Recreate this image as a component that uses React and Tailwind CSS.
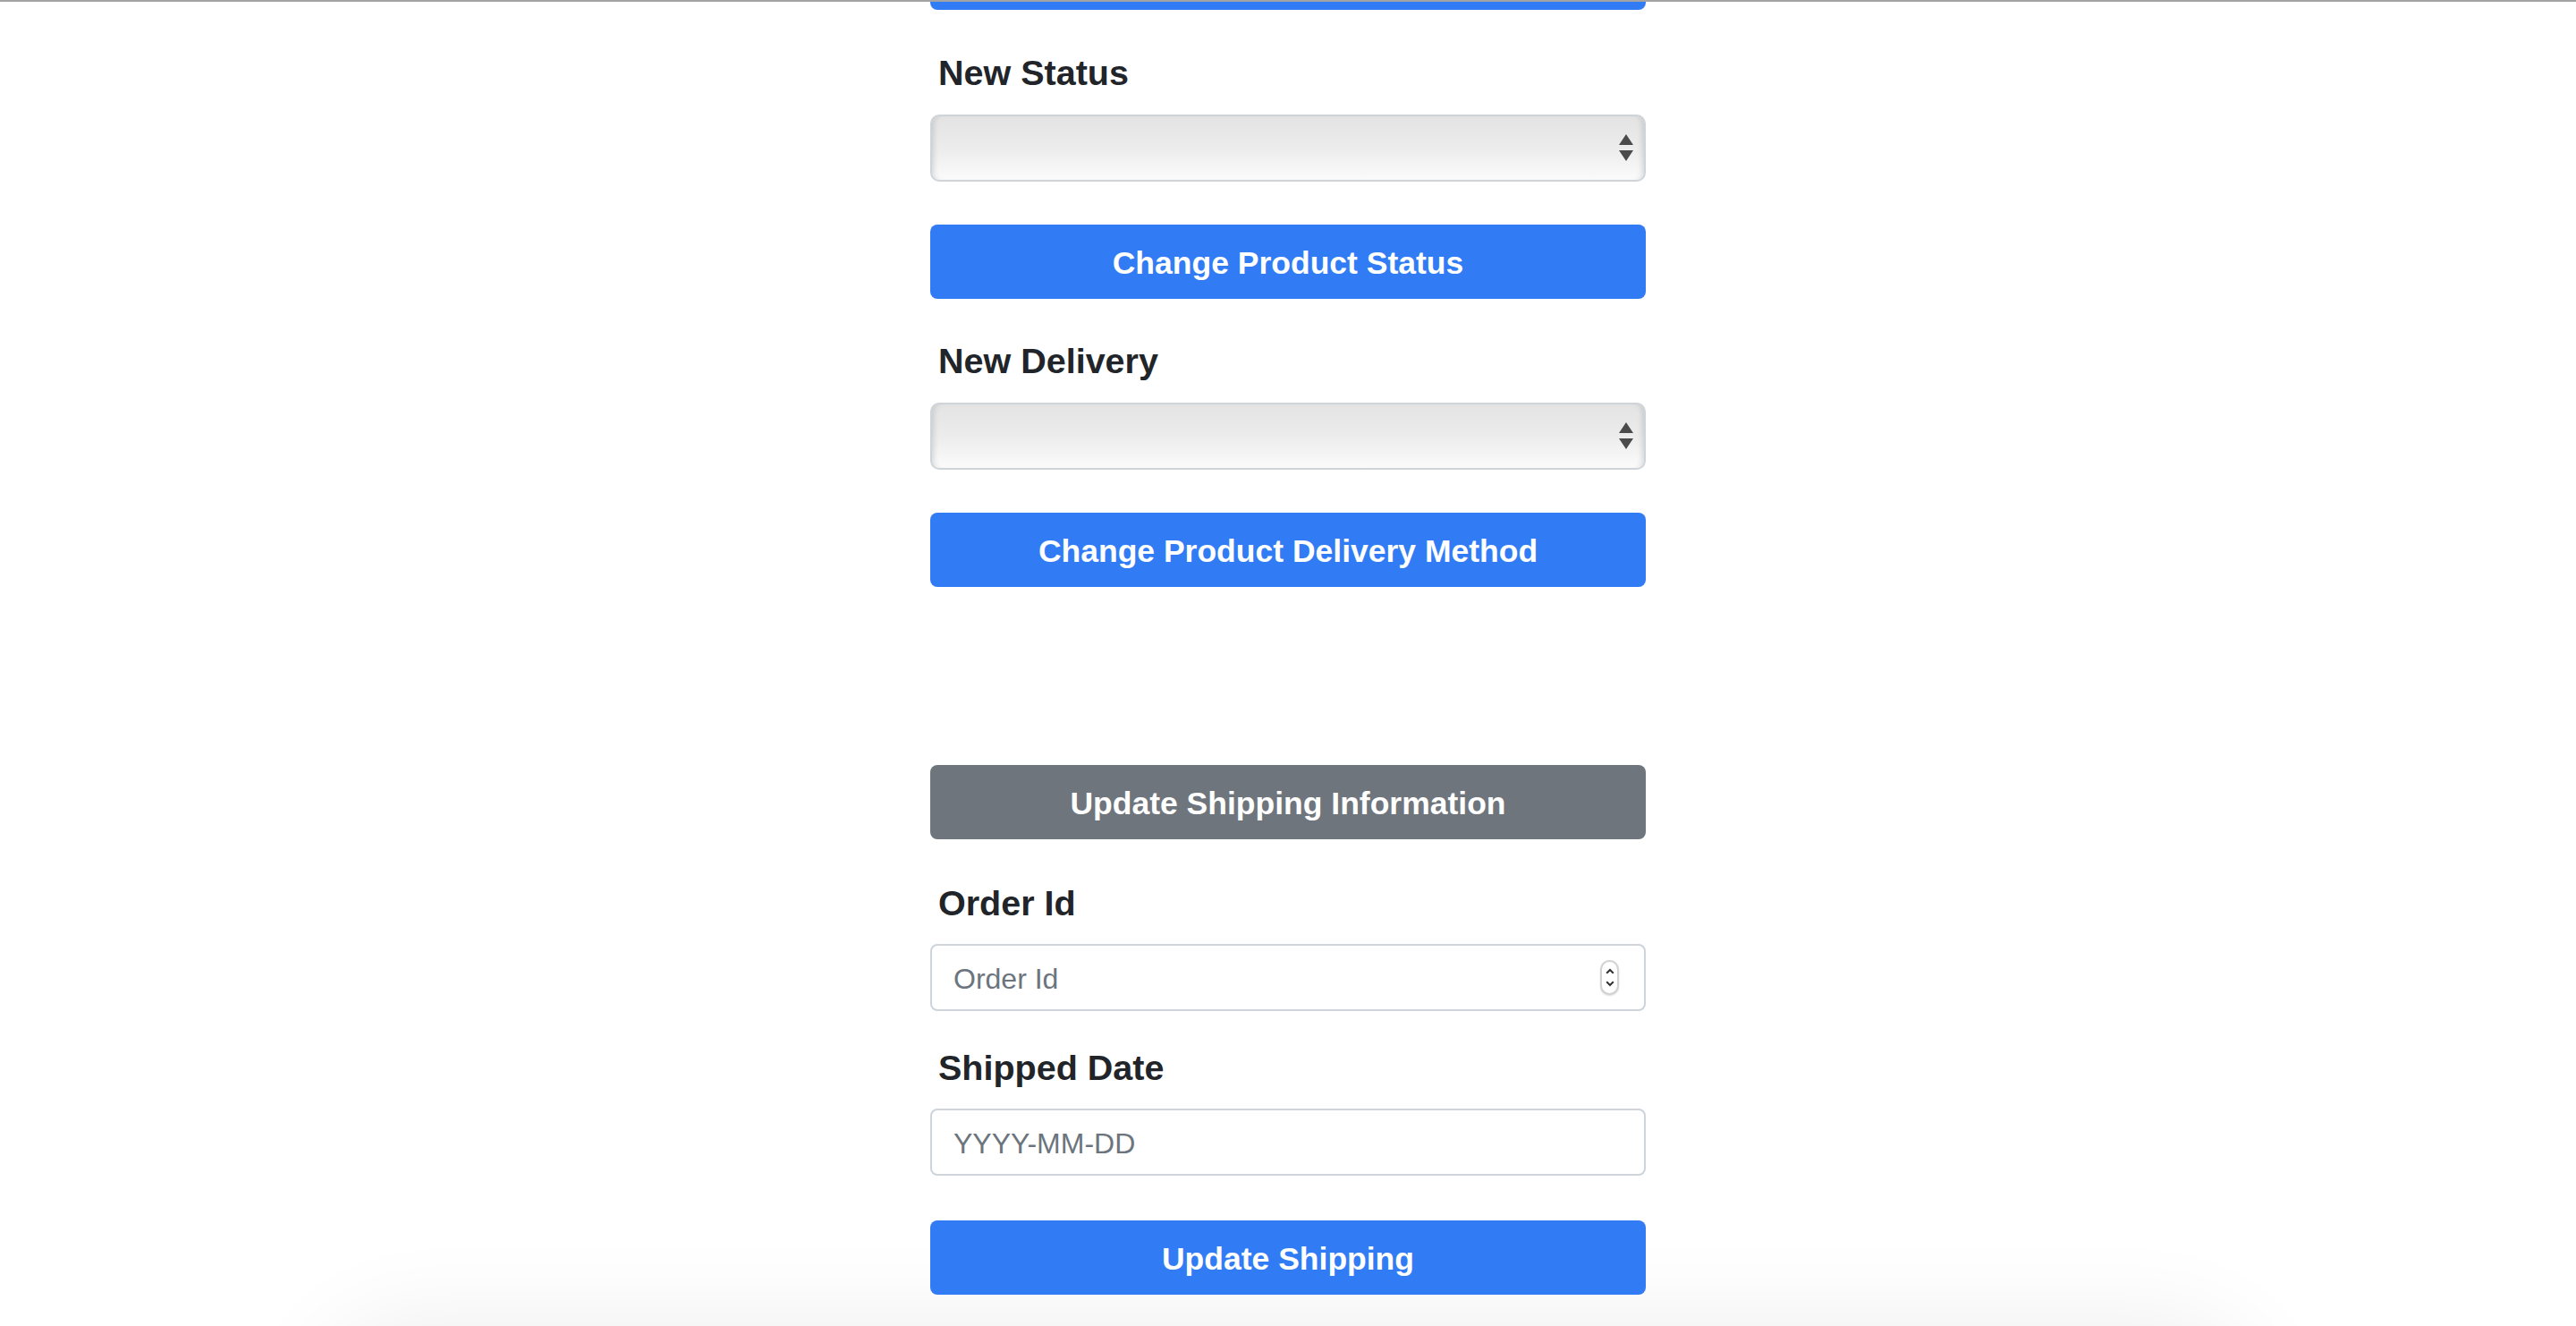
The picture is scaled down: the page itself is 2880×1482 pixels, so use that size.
import { useState } from "react";

function FieldLabel({ children, className = "" }) {
  return (
    <label className={`block pl-[9px] text-[39.5px] leading-[48px] font-bold text-[#212529] ${className}`}>
      {children}
    </label>
  );
}

function ActionButton({ children, tone = "primary", className = "" }) {
  const colors = tone === "primary" ? "bg-[#317cf5]" : "bg-[#6e757d]";
  return (
    <button
      type="button"
      className={`block h-[83px] w-full rounded-[8px] pt-[5px] ${colors} text-[35.5px] font-bold text-white ${className}`}
    >
      {children}
    </button>
  );
}

// macOS-looking native select with the up/down arrows
function StatusSelect({ value, onChange }) {
  return (
    <div className="relative mt-[23px]">
      <select
        value={value}
        onChange={(e) => onChange(e.target.value)}
        className="block h-[75px] w-full appearance-none rounded-[10px] border-2 border-[#cfd4d9] bg-linear-to-b from-[#e3e3e3] via-[#ececec] to-[#fbfbfb] shadow-[inset_7px_0_6px_-5px_rgba(0,0,0,0.13),inset_-7px_0_6px_-5px_rgba(0,0,0,0.13)] outline-none"
      >
        <option value=""></option>
      </select>
      <svg
        className="pointer-events-none absolute right-[14px] top-[22px]"
        width="16"
        height="31"
        viewBox="0 0 16 31"
      >
        <path d="M8 0 L16 12 L0 12 Z M0 18 L16 18 L8 30 Z" fill="#4b4b4b" />
      </svg>
    </div>
  );
}

function TextField({ placeholder, value, onChange, spinner = false, className = "" }) {
  return (
    <div className={`relative mt-[22px] ${className}`}>
      <input
        type="text"
        value={value}
        onChange={(e) => onChange(e.target.value)}
        placeholder={placeholder}
        className="block h-[75px] w-full rounded-[8px] border-2 border-[#ced4da] bg-white px-[24px] pt-[4px] text-[32px] text-[#495057] placeholder-[#6c757d] outline-none"
      />
      {spinner && (
        <div className="pointer-events-none absolute right-[30px] top-[18px] flex h-[39px] w-[21px] flex-col items-center justify-center gap-[7px] rounded-full border-2 border-[#d2d2d2] bg-white shadow-[0_1px_2px_rgba(0,0,0,0.15)]">
          <svg width="10" height="7" viewBox="0 0 10 7">
            <path d="M1.2 5.8 L5 2 L8.8 5.8" fill="none" stroke="#333" strokeWidth="2" />
          </svg>
          <svg width="10" height="7" viewBox="0 0 10 7">
            <path d="M1.2 1.2 L5 5 L8.8 1.2" fill="none" stroke="#333" strokeWidth="2" />
          </svg>
        </div>
      )}
    </div>
  );
}

export default function App() {
  const [status, setStatus] = useState("");
  const [delivery, setDelivery] = useState("");
  const [orderId, setOrderId] = useState("");
  const [shippedDate, setShippedDate] = useState("");

  return (
    <div className="relative h-[1482px] overflow-hidden bg-white font-['Liberation_Sans',Arial,sans-serif]">
      {/* window edge */}
      <div className="h-[2px] bg-[#a3a3a3]" />

      {/* soft shadow creeping in at the bottom */}
      <div className="pointer-events-none absolute left-[420px] right-[420px] top-[1540px] h-[80px] rounded-full shadow-[0_0_110px_60px_rgba(0,0,0,0.075)]" />

      <div className="relative mx-auto w-[800px]">
        {/* tail end of the previous button, scrolled off */}
        <div className="h-[9px] rounded-b-[8px] bg-[#317cf5]" />

        <FieldLabel className="mt-[46px]">New Status</FieldLabel>
        <StatusSelect value={status} onChange={setStatus} />
        <ActionButton className="mt-[48px]">Change Product Status</ActionButton>

        <FieldLabel className="mt-[45px]">New Delivery</FieldLabel>
        <StatusSelect value={delivery} onChange={setDelivery} />
        <ActionButton className="mt-[48px]">Change Product Delivery Method</ActionButton>

        <ActionButton tone="secondary" className="mt-[199px]">
          Update Shipping Information
        </ActionButton>

        <FieldLabel className="mt-[47px]">Order Id</FieldLabel>
        <TextField placeholder="Order Id" value={orderId} onChange={setOrderId} spinner />

        <FieldLabel className="mt-[39px]">Shipped Date</FieldLabel>
        <TextField placeholder="YYYY-MM-DD" value={shippedDate} onChange={setShippedDate} />

        <ActionButton className="mt-[50px]">Update Shipping</ActionButton>
      </div>
    </div>
  );
}
